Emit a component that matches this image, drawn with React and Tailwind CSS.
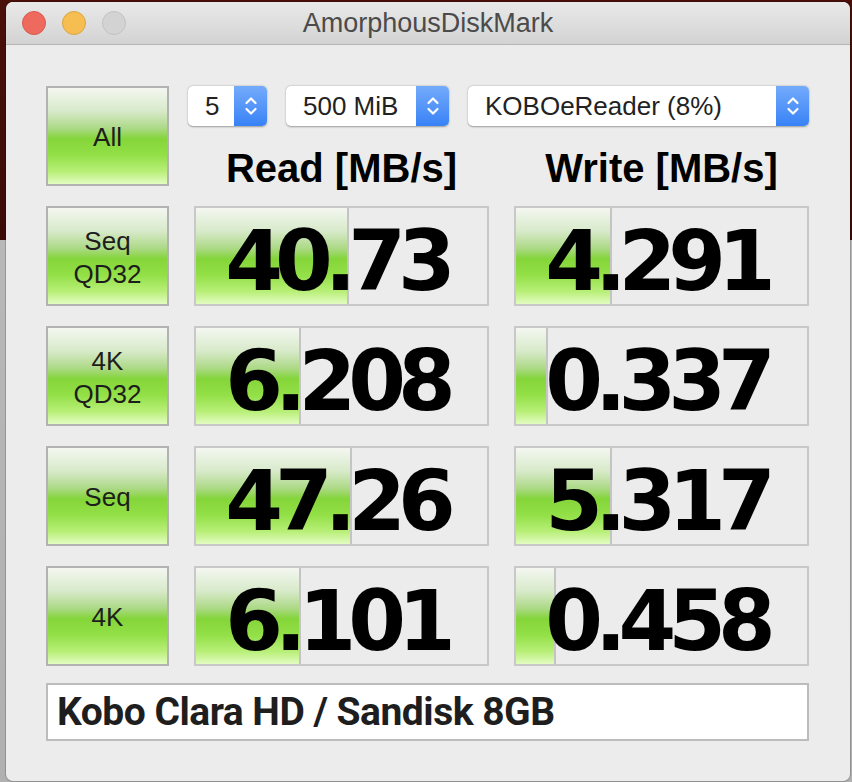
import React from 'react';

const rows = [
    { label: ['Seq', 'QD32'], read: '40.73', readBar: 153, write: '4.291', writeBar: 96 },
    { label: ['4K', 'QD32'], read: '6.208', readBar: 105, write: '0.337', writeBar: 32 },
    { label: ['Seq'], read: '47.26', readBar: 156, write: '5.317', writeBar: 96 },
    { label: ['4K'], read: '6.101', readBar: 105, write: '0.458', writeBar: 40 }
];

const green =
    'bg-[linear-gradient(to_bottom,#f4f7f1_0%,#d8eaca_24%,#acd986_42%,#84d53a_53%,#93e047_70%,#b8ef78_87%,#e3fcc1_100%)]';

function Chevrons() {
    return (
        <svg width="14" height="22" viewBox="0 0 14 22" fill="none" stroke="white" strokeWidth="2.2" strokeLinecap="round" strokeLinejoin="round">
            <path d="M2.5 8 L7 3.5 L11.5 8" />
            <path d="M2.5 14 L7 18.5 L11.5 14" />
        </svg>
    );
}

function Select({ value, width }) {
    return (
        <div
            className={`flex h-[40px] ${width} items-stretch rounded-[5px] bg-white shadow-[0_0.5px_2px_rgba(0,0,0,0.35)]`}
        >
            <div className="flex flex-1 items-center pl-[17px] text-[26px] text-[#222] font-['Liberation_Sans',sans-serif]">
                {value}
            </div>
            <div className="flex w-[33px] items-center justify-center rounded-r-[5px] bg-[linear-gradient(to_bottom,#74abfb,#3882f6)]">
                <Chevrons />
            </div>
        </div>
    );
}

function TestButton({ lines }) {
    return (
        <div
            className={`flex h-[100px] w-[123px] shrink-0 flex-col items-center justify-center border-2 border-[#b2b2b2] pt-[3px] ${green} text-[26px] leading-[33px] text-[#1d1d1d] font-['Liberation_Sans',sans-serif]`}
        >
            {lines.map((l) => (
                <span key={l}>{l}</span>
            ))}
        </div>
    );
}

function ResultCell({ value, bar }) {
    return (
        <div className="relative flex h-[100px] w-[295px] items-center justify-center border-2 border-[#c8c8c8] bg-[#ececec]">
            <div
                className={`absolute inset-y-0 left-0 border-r-2 border-[#c4c4c4] ${green}`}
                style={{ width: bar }}
            />
            <span className="relative pt-[10px] pr-[10px] text-[83px] font-bold leading-none tracking-[-8px] text-black font-['DejaVu_Sans',sans-serif]">
                {value}
            </span>
        </div>
    );
}

function App() {
    return (
        <div className="h-[782px] w-[852px] overflow-hidden bg-[linear-gradient(to_bottom,#4a0f08_0px,#3b0c07_240px,#b8b8b8_240px,#b0b0b0_782px)] pl-[6px] pt-[2px]">
            <div className="flex h-[779px] w-[844px] flex-col overflow-hidden rounded-[7px] bg-[#ececec] shadow-[0_0_0_1px_rgba(0,0,0,0.18)]">
                {/* Title bar */}
                <div className="flex h-[43px] shrink-0 items-center border-b border-[#b5b5b5] bg-[linear-gradient(to_bottom,#e9e9e9,#d3d3d3)] px-[16px]">
                    <div className="flex w-[120px] gap-[16px]">
                        <span className="h-[24px] w-[24px] rounded-full border border-[#d85a4e] bg-[#ee6a5f]" />
                        <span className="h-[24px] w-[24px] rounded-full border border-[#d9a640] bg-[#f6be50]" />
                        <span className="h-[24px] w-[24px] rounded-full border border-[#c2c2c2] bg-[#d3d3d3]" />
                    </div>
                    <div className="flex-1 text-center text-[27px] text-[#4b4b4b] font-['Liberation_Sans',sans-serif]">
                        AmorphousDiskMark
                    </div>
                    <div className="w-[120px]" />
                </div>

                {/* Content */}
                <div className="flex flex-col pl-[40px] pt-[41px]">
                    <div className="flex">
                        <TestButton lines={['All']} />
                        <div className="ml-[19px] flex h-[100px] flex-col">
                            <div className="flex gap-[19px]">
                                <Select value="5" width="w-[79px]" />
                                <Select value="500 MiB" width="w-[163px]" />
                                <Select value="KOBOeReader (8%)" width="w-[341px]" />
                            </div>
                            <div className="mt-[19px] flex gap-[25px] pl-[6px] text-[40px] font-bold leading-[46px] text-black font-['Liberation_Sans',sans-serif]">
                                <div className="w-[295px] text-center">Read [MB/s]</div>
                                <div className="w-[295px] text-center">Write [MB/s]</div>
                            </div>
                        </div>
                    </div>

                    {rows.map((r) => (
                        <div key={r.label.join('')} className="mt-[20px] flex gap-[25px]">
                            <TestButton lines={r.label} />
                            <ResultCell value={r.read} bar={r.readBar} />
                            <ResultCell value={r.write} bar={r.writeBar} />
                        </div>
                    ))}

                    {/* Comment field */}
                    <div className="mt-[17px] flex h-[58px] w-[763px] items-center border-2 border-[#bcbcbc] bg-white pl-[9px] text-[39px] font-bold tracking-[-0.5px] text-[#1e1e1e] font-['Roboto',sans-serif]">
                        Kobo Clara HD / Sandisk 8GB
                    </div>
                </div>
            </div>
        </div>
    );
}

export default App;
